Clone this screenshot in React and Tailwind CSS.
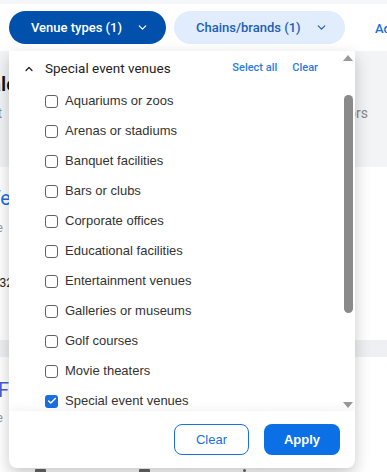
import { ChevronDown, ChevronUp, Check } from 'lucide-react'

const venueTypes = [
  { label: 'Aquariums or zoos', checked: false },
  { label: 'Arenas or stadiums', checked: false },
  { label: 'Banquet facilities', checked: false },
  { label: 'Bars or clubs', checked: false },
  { label: 'Corporate offices', checked: false },
  { label: 'Educational facilities', checked: false },
  { label: 'Entertainment venues', checked: false },
  { label: 'Galleries or museums', checked: false },
  { label: 'Golf courses', checked: false },
  { label: 'Movie theaters', checked: false },
  { label: 'Special event venues', checked: true },
]

const roboto = { fontFamily: 'Roboto, Inter, sans-serif' }

const CheckRow = ({ label, checked }) => (
  <div className="h-[30px] flex items-center pl-[36px] shrink-0">
    {checked ? (
      <span className="w-[13px] h-[13px] rounded-[3px] bg-[#1a6fe0] flex items-center justify-center">
        <Check size={10} strokeWidth={3.5} className="text-white" />
      </span>
    ) : (
      <span className="w-[13px] h-[13px] rounded-[3px] border-[1.5px] border-[#5f6368] bg-white" />
    )}
    <span className="ml-[7px] text-[13px] text-[#333]">{label}</span>
  </div>
)

const App = () => {
  return (
    <div className="relative w-[387px] h-[472px] overflow-hidden bg-white font-['Liberation_Sans',Arial,sans-serif]">
      {/* Barra de filtros */}
      <div className="h-[4px] bg-[#f5f6f8]" />
      <div className="h-[47px] flex items-start pt-[7px] pl-[9px] gap-[8px] whitespace-nowrap" style={roboto}>
        <button className="h-[33px] w-[157px] shrink-0 rounded-full bg-[#0050ac] text-white text-[13px] font-medium flex items-center pl-[22px]">
          Venue types (1)
          <ChevronDown size={13} strokeWidth={2.2} className="ml-[14px]" />
        </button>
        <button className="h-[33px] w-[171px] shrink-0 rounded-full bg-[#e1edfd] text-[#1d5fb6] text-[13px] font-medium flex items-center pl-[22px]">
          Chains/brands (1)
          <ChevronDown size={13} strokeWidth={2.2} className="ml-[14px]" />
        </button>
        <span className="ml-[22px] mt-[8px] text-[13px] font-medium text-[#1a6fe0]">Add</span>
      </div>

      {/* Conteúdo por trás do menu */}
      <div className="bg-[#f3f4f6] h-[116px] flex flex-col" style={roboto}>
        <div className="flex justify-between pt-[18px]">
          <span className="-ml-[22px] text-[20px] font-semibold text-[#111]">Sale</span>
          <span />
        </div>
        <div className="flex justify-between mt-[4px] text-[14px] text-[#888]">
          <span className="-ml-[20px]">Opt</span>
          <span className="mr-[19px]">ors</span>
        </div>
      </div>
      <div className="bg-white h-[173px] flex flex-col" style={roboto}>
        <span className="-ml-[12px] mt-[16px] text-[20px] text-[#1a6fe0]">Ve</span>
        <span className="-ml-[20px] mt-[6px] text-[12px] text-[#999]">Sale</span>
        <span className="-ml-[14px] mt-[37px] text-[12px] text-[#222]">2032</span>
        <span className="-ml-[4px] mt-[12px] text-[11px] text-[#999]">›</span>
      </div>
      <div className="bg-[#eef0f3] h-[17px]" />
      <div className="bg-white flex flex-col" style={roboto}>
        <span className="-ml-[2px] mt-[18px] text-[20px] text-[#4b5bd6]">Fa</span>
        <span className="-ml-[20px] mt-[4px] text-[12px] text-[#999]">Sale</span>
        <div className="flex gap-[93px] ml-[35px] mt-[42px]">
          <span className="w-[11px] h-[6px] bg-[#666] rounded-[1px]" />
          <span className="w-[11px] h-[6px] bg-[#666] rounded-[1px]" />
          <span className="w-[3px] h-[3px] bg-[#666] rounded-full" />
        </div>
      </div>

      {/* Menu suspenso */}
      <div className="absolute left-[9px] top-[51px] w-[346px] h-[417px] bg-white rounded-b-[8px] shadow-[0_6px_16px_rgba(0,0,0,0.22)] flex flex-col overflow-hidden">
        <div className="flex h-[360px]">
          <div className="flex-1 flex flex-col overflow-hidden">
            <div className="h-[35px] shrink-0 flex items-center pl-[14px] pr-[24px]" style={roboto}>
              <ChevronUp size={12} strokeWidth={2.5} className="text-[#222]" />
              <span className="ml-[10px] text-[13.5px] text-[#222]">Special event venues</span>
              <span className="ml-auto text-[11px] font-medium text-[#2b7de0]">Select all</span>
              <span className="ml-[15px] text-[11px] font-medium text-[#2b7de0]">Clear</span>
            </div>
            {venueTypes.map((v) => (
              <CheckRow key={v.label} label={v.label} checked={v.checked} />
            ))}
          </div>
          {/* barra de rolagem */}
          <div className="w-[12px] flex flex-col items-center pt-[4px] pb-[3px] mr-[1px]">
            <span className="w-0 h-0 border-l-[5px] border-r-[5px] border-b-[6px] border-l-transparent border-r-transparent border-b-[#999]" />
            <span className="w-[9px] h-[218px] rounded-full bg-[#8a8a8a] mt-[34px]" />
            <span className="mt-auto w-0 h-0 border-l-[5px] border-r-[5px] border-t-[6px] border-l-transparent border-r-transparent border-t-[#999]" />
          </div>
        </div>
        <div className="flex-1 flex items-start justify-end gap-[15px] pt-[13px] pr-[15px] shadow-[0_-4px_8px_rgba(0,0,0,0.04)]">
          <button className="w-[75px] h-[31px] rounded-[8px] border border-[#1a6fe0] text-[#1a6fe0] text-[13px]">
            Clear
          </button>
          <button className="w-[76px] h-[31px] rounded-[8px] bg-[#0b6fe5] text-white text-[13px] font-bold">
            Apply
          </button>
        </div>
      </div>
    </div>
  )
}

export default App
